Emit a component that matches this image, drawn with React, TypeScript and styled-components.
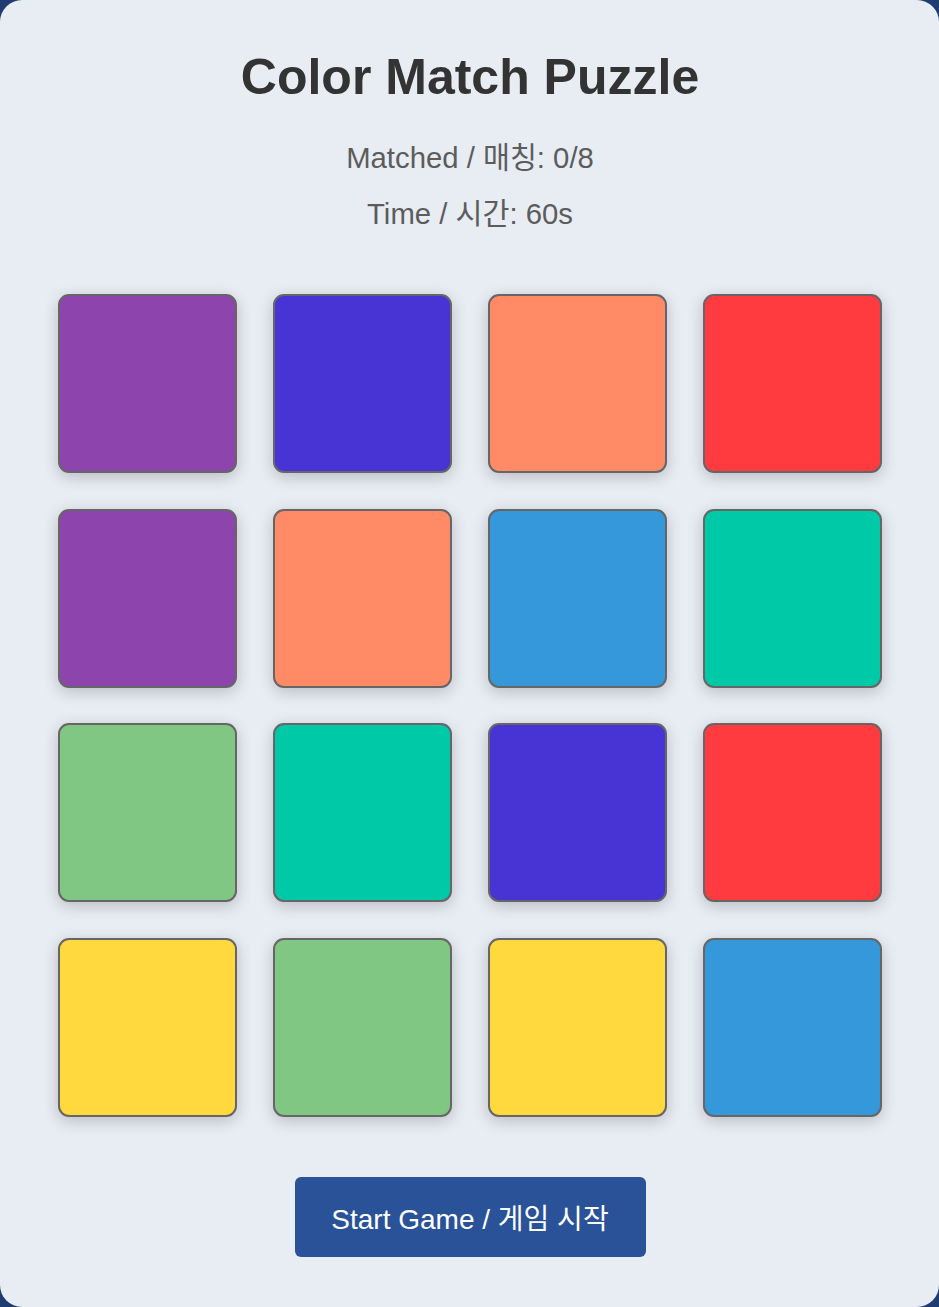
import React from "react";
import styled, { createGlobalStyle } from "styled-components";

const Global = createGlobalStyle`
  html, body { margin: 0; padding: 0; }
  body {
    background: #1e3c72;
    font-family: "Liberation Sans", Arial, "Noto Sans CJK KR", sans-serif;
  }
`;

const Card = styled.div`
  width: 939px;
  height: 1307px;
  box-sizing: border-box;
  background: #e8ecf3;
  border-radius: 22px;
  display: flex;
  flex-direction: column;
  align-items: center;
  padding: 49px 57px 0 58px;
`;

const Title = styled.h1`
  margin: 0;
  font-size: 50px;
  font-weight: 700;
  color: #333333;
  line-height: 57px;
`;

const Info = styled.p<{ $top: number }>`
  margin: ${(p) => p.$top}px 0 0;
  font-size: 29.3px;
  line-height: 33px;
  color: #5c5c5c;
`;

const Grid = styled.div`
  margin-top: 64px;
  width: 100%;
  display: grid;
  grid-template-columns: repeat(4, 179px);
  grid-auto-rows: 179px;
  column-gap: 36px;
  row-gap: 35.5px;
`;

const Tile = styled.div<{ $color: string }>`
  box-sizing: border-box;
  background: ${(p) => p.$color};
  border: 2.5px solid #666666;
  border-radius: 11px;
  box-shadow: 0 4px 16px rgba(0, 0, 0, 0.2);
`;

const Button = styled.button`
  margin-top: 60px;
  width: 351px;
  height: 80px;
  border: none;
  border-radius: 6px;
  background: #2a5298;
  color: #ffffff;
  font-family: "Liberation Sans", Arial, "Noto Sans CJK KR", sans-serif;
  font-size: 28px;
  cursor: pointer;
`;

const colors = [
  "#8e44ad", "#4834d4", "#ff8a65", "#ff3b3f",
  "#8e44ad", "#ff8a65", "#3498db", "#00c9a7",
  "#81c784", "#00c9a7", "#4834d4", "#ff3b3f",
  "#ffd93d", "#81c784", "#ffd93d", "#3498db",
];

export default function App() {
  return (
    <>
      <Global />
      <Card>
        <Title>Color Match Puzzle</Title>
        <Info $top={35}>Matched / 매칭: 0/8</Info>
        <Info $top={23}>Time / 시간: 60s</Info>
        <Grid>
          {colors.map((c, i) => (
            <Tile key={i} $color={c} />
          ))}
        </Grid>
        <Button>Start Game / 게임 시작</Button>
      </Card>
    </>
  );
}
